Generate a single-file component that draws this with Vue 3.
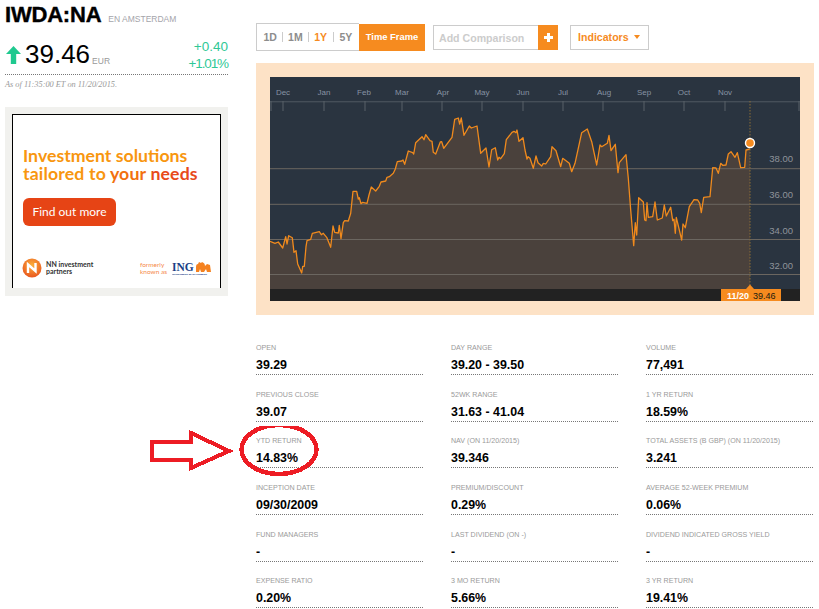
<script setup>
import { computed } from 'vue'

const tabs = [
  { label: '1D' },
  { label: '1M' },
  { label: '1Y', active: true },
  { label: '5Y' }
]

const stats = [
  { label: 'Open', value: '39.29' },
  { label: 'Day Range', value: '39.20 - 39.50' },
  { label: 'Volume', value: '77,491' },
  { label: 'Previous Close', value: '39.07' },
  { label: '52wk Range', value: '31.63 - 41.04' },
  { label: '1 Yr Return', value: '18.59%' },
  { label: 'YTD Return', value: '14.83%' },
  { label: 'NAV (on 11/20/2015)', value: '39.346' },
  { label: 'Total Assets (B GBP) (on 11/20/2015)', value: '3.241' },
  { label: 'Inception Date', value: '09/30/2009' },
  { label: 'Premium/Discount', value: '0.29%' },
  { label: 'Average 52-Week Premium', value: '0.06%' },
  { label: 'Fund Managers', value: '-' },
  { label: 'Last Dividend (on -)', value: '-' },
  { label: 'Dividend Indicated Gross Yield', value: '-' },
  { label: 'Expense Ratio', value: '0.20%' },
  { label: '3 Mo Return', value: '5.66%' },
  { label: '3 Yr Return', value: '19.41%' }
]

const months = [
  ['Dec', 283], ['Jan', 324], ['Feb', 364], ['Mar', 402], ['Apr', 443], ['May', 482],
  ['Jun', 523], ['Jul', 563], ['Aug', 604], ['Sep', 644], ['Oct', 684], ['Nov', 725]
]
const ticks = [271, 283, 324, 365, 402, 442, 482, 523, 563, 603, 644, 684, 725, 799]
const grid = [
  [168.7, '38.00', 159],
  [204.3, '36.00', 195],
  [239.5, '34.00', 231],
  [274.5, '32.00', 266]
]

// price line, read off the chart at 3x
const left = [
  30,424, 45,430, 55,426, 68,444, 77,410, 81,432, 86,407, 97,413, 102,457, 108,452, 113,492, 125,519,
  128,499, 133,499, 138,440, 141,422, 152,418, 157,400, 178,395, 184,404, 190,400, 200,412, 212,442,
  219,378, 224,397, 235,399, 238,376, 243,416, 250,368, 254,362, 265,363, 272,340, 279,274, 290,274,
  295,297, 298,293, 303,311, 308,307, 321,310, 327,285, 334,261, 347,273, 358,259, 363,246, 377,243,
  381,232, 388,230, 400,220, 406,207, 412,185, 425,183, 429,180, 434,193, 445,153, 458,158, 461,162,
  467,128, 486,110, 492,119, 497,104, 510,122, 516,124, 520,157, 527,162, 541,126, 545,125, 551,145,
  576,112, 584,58, 595,54, 599,72, 604,54, 612,106, 628,78, 634,84, 651,78, 662,160, 678,144, 687,201,
  695,149, 706,143, 713,180, 717,172, 722,176, 733,161, 739,119, 756,97, 762,94, 768,98, 771,90,
  777,124, 789,113, 795,150, 801,177, 804,170
]
const right = [
  0,175, 10,205, 18,168, 24,188, 35,198, 40,190, 47,192, 62,170, 66,140, 78,152, 92,200, 98,175,
  118,190, 125,215, 135,190, 155,98, 172,87, 185,125, 200,195, 210,135, 215,140, 232,130, 237,106,
  243,152, 256,133, 264,218, 268,188, 288,164, 295,235, 302,330, 311,437, 316,368, 320,405, 326,293,
  340,306, 344,360, 348,362, 351,308, 355,352, 368,350, 375,306, 382,360, 397,354, 403,315, 409,348,
  422,322, 428,362, 432,358, 436,400, 439,352, 455,420, 459,372, 466,383, 478,320, 492,299, 503,300,
  509,310, 514,338, 521,292, 540,290, 548,203, 558,204, 565,220, 572,190, 578,196, 588,195, 595,162,
  603,155, 615,172, 622,158, 632,203, 644,202, 648,150, 660,147
]

function toPoints(list, originX) {
  const out = []
  for (let i = 0; i < list.length; i += 2) {
    out.push(`${(originX + list[i] / 3).toFixed(1)},${(100 + list[i + 1] / 3).toFixed(1)}`)
  }
  return out
}

const linePoints = computed(() => [...toPoints(left, 260), ...toPoints(right, 530)].join(' '))
const areaPoints = computed(() => `270,289 ${linePoints.value} 750,143 750,289`)
</script>

<template>
  <div class="page">
    <aside class="side">
      <div class="title-row">
        <h1>IWDA:NA</h1>
        <span class="exchange">EN AMSTERDAM</span>
      </div>
      <div class="quote">
        <svg class="up" width="15" height="18" viewBox="0 0 15 18">
          <path d="M7.5 0 15 8H10.2V18H4.8V8H0Z" fill="#1fc98f" />
        </svg>
        <span class="price">39.46</span>
        <span class="currency">EUR</span>
        <div class="change">
          <span>+0.40</span>
          <span class="pct">+1.01%</span>
        </div>
      </div>
      <p class="asof">As of 11:35:00 ET on 11/20/2015.</p>

      <div class="ad">
        <div class="ad-inner">
          <div class="headline">
            <div>Investment solutions</div>
            <div class="line-two">tailored to <span class="your">your</span> <span class="needs">needs</span></div>
          </div>
          <div class="find">Find out more</div>
          <div class="ad-logos">
            <svg width="20" height="20" viewBox="0 0 20 20">
              <defs>
                <radialGradient id="nn" cx="50%" cy="35%" r="70%">
                  <stop offset="0" stop-color="#fbb03b" />
                  <stop offset="1" stop-color="#e8501c" />
                </radialGradient>
              </defs>
              <circle cx="10" cy="10" r="9.5" fill="url(#nn)" />
              <path d="M6 15V6.5L13.5 13V5" fill="none" stroke="#fff" stroke-width="2.4" />
            </svg>
            <div class="nn-name">NN investment<br />partners</div>
            <div class="formerly">formerly<br />known as</div>
            <div class="ing">
              <div class="ing-top">
                ING
                <svg width="15" height="10" viewBox="0 0 15 10">
                  <path d="M0 10V5Q0 2 2 2L3 0 5 1 6 0Q9 1 9 4L11 2 14 3 15 10H11L10 7 8 10H5L4 7 3 10Z" fill="#f58220" />
                </svg>
              </div>
              <div class="ing-sub">INVESTMENT MANAGEMENT</div>
            </div>
          </div>
        </div>
      </div>
    </aside>

    <main class="content">
      <div class="toolbar">
        <div class="frames">
          <div class="tabs">
            <span v-for="tab in tabs" :key="tab.label" class="tab" :class="{ active: tab.active }">{{ tab.label }}</span>
          </div>
          <div class="timeframe">Time Frame</div>
        </div>
        <div class="compare">
          <span class="compare-text">Add Comparison</span>
          <span class="plus">
            <svg width="11" height="11" viewBox="0 0 11 11"><path d="M4 1h3v3h3v3H7v3H4V7H1V4h3z" fill="#fff" /></svg>
          </span>
        </div>
        <div class="indicators">
          Indicators
          <svg width="6" height="4" viewBox="0 0 6 4"><path d="M0 0h6L3 4z" fill="#f68b1f" /></svg>
        </div>
      </div>

      <div class="chart-wrap">
        <svg class="chart" width="530" height="224" viewBox="270 77 530 224">
          <rect x="270" y="77" width="530" height="224" fill="#2a3440" />
          <rect x="270" y="101" width="530" height="1.4" fill="#454e58" />
          <rect v-for="t in ticks" :key="t" :x="t - 0.5" y="101" width="1" height="10" fill="#596069" />
          <text v-for="m in months" :key="m[0]" :x="m[1]" y="95" class="month">{{ m[0] }}</text>
          <polygon :points="areaPoints" fill="#4a413c" />
          <g v-for="g in grid" :key="g[1]">
            <rect x="270" :y="g[0] - 0.5" width="530" height="1" fill="#6b6660" />
            <text x="793" :y="g[2] + 3" class="axis">{{ g[1] }}</text>
          </g>
          <polyline :points="linePoints" fill="none" stroke="#f08a1d" stroke-width="1.3" stroke-linejoin="round" />
          <rect x="270" y="289" width="530" height="12" fill="#222222" />
          <line x1="750" y1="101" x2="750" y2="289" stroke="#8a6d36" stroke-width="1" stroke-dasharray="1.5 1.5" />
          <circle cx="750" cy="143" r="4.5" fill="#f68b1f" stroke="#fff" stroke-width="1.4" />
          <path d="M746 289 750 284.5 754 289Z" fill="#f68b1f" />
          <rect x="721" y="289" width="60" height="12" fill="#f68b1f" />
          <text x="727" y="298.5" class="tag tag-date">11/20</text>
          <text x="753" y="298.5" class="tag tag-value">39.46</text>
        </svg>
      </div>

      <div class="stats">
        <div v-for="s in stats" :key="s.label" class="stat">
          <div class="stat-label">{{ s.label }}</div>
          <div class="stat-value">{{ s.value }}</div>
        </div>
      </div>
    </main>

    <svg class="marks" width="200" height="70" viewBox="0 0 200 70">
      <path d="M2 16H41V7L79 25 41 42V34H2Z" fill="none" stroke="#ed1c24" stroke-width="4" />
      <ellipse cx="129" cy="23.5" rx="37.5" ry="24.5" fill="none" stroke="#ed1c24" stroke-width="4.5" />
    </svg>
  </div>
</template>

<style>
html,
body {
  margin: 0;
  overflow: hidden;
  background: #fff;
}
</style>

<style scoped>
.page {
  position: relative;
  display: flex;
  width: 819px;
  height: 609px;
  overflow: hidden;
  box-sizing: border-box;
  padding-left: 5px;
  font-family: "Liberation Sans", Arial, sans-serif;
  color: #000;
}

.side {
  flex: 0 0 223px;
  margin-right: 28px;
}

.title-row {
  display: flex;
  align-items: baseline;
  height: 24px;
  margin-top: 3px;
}

h1 {
  margin: 0;
  font-size: 22px;
  line-height: 24px;
  font-weight: 700;
  letter-spacing: -0.2px;
  -webkit-text-stroke: 0.4px #000;
}

.exchange {
  margin-left: 7px;
  font-size: 8.5px;
  color: #a4a4aa;
}

.quote {
  display: flex;
  align-items: flex-end;
  height: 47px;
  border-bottom: 1px dotted #777;
}

.up {
  margin: 0 4px 10px 1px;
}

.price {
  font-size: 26px;
  line-height: 30px;
  margin-bottom: 5px;
}

.currency {
  margin: 0 0 8px 2px;
  font-size: 8.5px;
  color: #999;
}

.change {
  display: flex;
  flex-direction: column;
  align-items: flex-end;
  margin-left: auto;
  margin-bottom: 2px;
  font-size: 13.5px;
  line-height: 17px;
  color: #2fc896;
}

.pct {
  letter-spacing: -1.1px;
}

.asof {
  margin: 5px 0 0;
  font-family: "Liberation Serif", serif;
  font-style: italic;
  font-size: 8.3px;
  line-height: 10px;
  color: #999;
}

.ad {
  margin-top: 17px;
  height: 189px;
  box-sizing: border-box;
  padding: 7px 7px 8px;
  background: #f1f1ee;
}

.ad-inner {
  height: 100%;
  box-sizing: border-box;
  padding: 32px 10px 0;
  background: #fff;
  border: solid #000;
  border-width: 1px 1px 0;
}

.headline {
  font-family: Lato, sans-serif;
  font-size: 17.7px;
  font-weight: 700;
  line-height: 18px;
  white-space: nowrap;
  color: #f8960f;
}

.line-two {
  letter-spacing: 0.14px;
}

.your {
  color: #f2700f;
}

.needs {
  color: #e84a1a;
}

.find {
  width: 93px;
  height: 28px;
  margin-top: 15px;
  border-radius: 6px;
  background: #e64415;
  color: #fff;
  font-family: Lato, sans-serif;
  font-size: 12px;
  line-height: 28px;
  text-align: center;
}

.ad-logos {
  display: flex;
  align-items: center;
  height: 20px;
  margin-top: 32px;
  margin-left: -1px;
}

.nn-name {
  margin-left: 4px;
  font-family: Lato, sans-serif;
  font-size: 7px;
  font-weight: 700;
  line-height: 7px;
  color: #333;
}

.formerly {
  margin-left: auto;
  font-family: Lato, sans-serif;
  font-size: 6.5px;
  line-height: 7px;
  color: #f58a4a;
}

.ing {
  margin-left: 5px;
  margin-right: -1px;
}

.ing-top {
  display: flex;
  align-items: flex-end;
  gap: 2px;
  height: 11px;
  font-family: "Liberation Serif", serif;
  font-size: 11.5px;
  font-weight: 700;
  line-height: 10px;
  color: #1b3f86;
}

.ing-sub {
  width: 39px;
  margin-top: 1px;
  overflow: hidden;
  white-space: nowrap;
  font-size: 2.5px;
  line-height: 3px;
  font-weight: 700;
  color: #1b3f86;
}

.content {
  flex: 0 0 558px;
}

.toolbar {
  display: flex;
  align-items: center;
  height: 28px;
  margin-top: 23px;
}

.frames {
  display: flex;
  height: 28px;
}

.tabs {
  display: flex;
  align-items: center;
  width: 103px;
  box-sizing: border-box;
  padding: 0 1px;
  border: 1px solid #ccc;
  border-right: 0;
}

.tab {
  flex: 1;
  height: 10px;
  font-size: 10.5px;
  font-weight: 700;
  line-height: 10px;
  text-align: center;
  color: #8d8d8d;
  border-left: 1px solid #ccc;
}

.tab:first-child {
  border-left: 0;
}

.tab.active {
  color: #f68b1f;
}

.timeframe {
  width: 66px;
  margin-top: 1px;
  background: #f68b1f;
  color: #fff;
  font-size: 9.4px;
  font-weight: 700;
  line-height: 26px;
  text-align: center;
}

.compare {
  display: flex;
  height: 25px;
  margin-left: 8px;
}

.compare-text {
  width: 105px;
  box-sizing: border-box;
  padding-left: 5px;
  border: 1px solid #ccc;
  border-right: 0;
  font-size: 10.6px;
  font-weight: 700;
  line-height: 25px;
  color: #ccc;
}

.plus {
  display: flex;
  align-items: center;
  justify-content: center;
  width: 20px;
  background: #f68b1f;
}

.indicators {
  display: flex;
  align-items: center;
  gap: 5px;
  width: 79px;
  height: 25px;
  box-sizing: border-box;
  margin-left: 12px;
  padding-left: 7px;
  border: 1px solid #ccc;
  font-size: 10.6px;
  font-weight: 700;
  color: #f68b1f;
}

.chart-wrap {
  width: 558px;
  height: 252px;
  box-sizing: border-box;
  margin-top: 12px;
  padding: 14px;
  background: #fde2c6;
}

.chart {
  display: block;
}

.month {
  font-size: 8px;
  text-anchor: middle;
  fill: #8793a3;
}

.axis {
  font-size: 9.5px;
  text-anchor: end;
  fill: #8e939a;
}

.tag {
  font-size: 9px;
}

.tag-date {
  fill: #fff;
  font-weight: 700;
}

.tag-value {
  fill: #201a10;
}

.stats {
  display: grid;
  grid-template-columns: repeat(3, 167px);
  grid-auto-rows: 46.67px;
  column-gap: 28px;
  margin-top: 29px;
}

.stat-label {
  height: 11px;
  font-size: 7.1px;
  line-height: 8px;
  text-transform: uppercase;
  color: #9a9a9a;
  white-space: nowrap;
}

.stat-value {
  height: 17px;
  padding-top: 2px;
  border-bottom: 1px dotted #777;
  font-size: 12.4px;
  font-weight: 700;
  line-height: 16px;
}

.marks {
  position: absolute;
  left: 150px;
  top: 426px;
  shape-rendering: crispEdges;
}
</style>
